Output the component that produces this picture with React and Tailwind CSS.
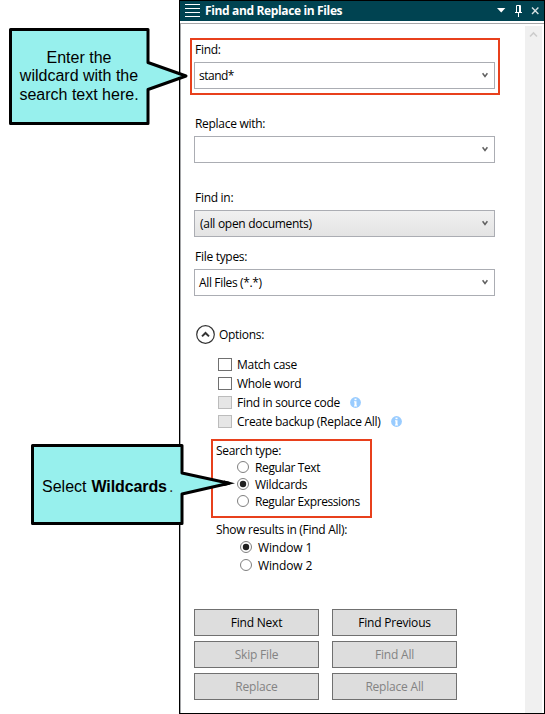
import React from "react";

function Chevron() {
  return (
    <svg width="6" height="6" viewBox="0 0 6 6" className="absolute right-[6px] top-[9px]">
      <path d="M0.6 1.3 L3 4.4 L5.4 1.3" fill="none" stroke="#606060" strokeWidth="1.5" />
    </svg>
  );
}

function Select({ value = "", className = "", textClass = "" }) {
  return (
    <div className={"relative h-[27px] w-[301px] border border-[#abadb3] pt-[4px] " + className}>
      <div className={"h-4 leading-[18px] " + textClass}>{value}</div>
      <Chevron />
    </div>
  );
}

function Info({ className = "" }) {
  return (
    <svg width="11" height="11" viewBox="0 0 11 11" className={className}>
      <circle cx="5.5" cy="5.5" r="5.4" fill="#99ccff" />
      <rect x="4.5" y="1.6" width="2" height="1.6" fill="#fff" />
      <path d="M4 4.2h2.5v4.2H7v1H4v-1h.5V5.2H4z" fill="#fff" />
    </svg>
  );
}

function Check({ label, disabled = false, info = "" }) {
  return (
    <div className="flex h-[19px] pl-[37px]">
      <div
        className={
          "mt-[3px] h-[13px] w-[14px] border " +
          (disabled ? "border-[#bcbcbc] bg-[#e6e6e6]" : "border-[#707070] bg-white")
        }
      />
      <span className="ml-[5px] mt-px h-4 leading-[18px]">{label}</span>
      {disabled && <Info className={info} />}
    </div>
  );
}

function Radio({ label, checked = false, className = "", textClass = "" }) {
  return (
    <div className={"flex " + className}>
      <svg width="12" height="12" viewBox="0 0 12 12" className="mt-[2px] shrink-0">
        <circle cx="6" cy="6" r="5.5" fill="#fff" stroke="#707070" strokeWidth="0.9" />
        {checked && <circle cx="6" cy="6" r="3.2" fill="#212121" />}
      </svg>
      <span className={"ml-[6px] h-4 leading-[18px] " + textClass}>{label}</span>
    </div>
  );
}

function Button({ children, disabled = false }) {
  return (
    <div
      className={
        "h-[27px] border border-[#707070] bg-[#dddddd] pt-[4px] text-center leading-[18px] tracking-[-0.2px] " +
        (disabled ? "text-[#838383]" : "text-black")
      }
    >
      {children}
    </div>
  );
}

export default function App() {
  return (
    <div className="relative h-[714px] w-[545px] overflow-hidden whitespace-nowrap bg-white pl-[179px] font-['Open_Sans','Noto_Sans',sans-serif] text-[12px] tracking-[-0.29px] text-black">
      <div className="flex h-[714px] w-[366px] flex-col border border-black">
        <div className="flex h-5 shrink-0 bg-[#004351] text-white">
          <svg width="15" height="14" viewBox="0 0 15 14" className="ml-[5px] mt-[3px]">
            <path d="M0 .5h15M0 4.5h15M0 8.5h15M0 12.5h15" stroke="#fff" />
          </svg>
          <span className="ml-[5px] mt-px h-4 font-bold leading-[18px] tracking-[-0.36px]">Find and Replace in Files</span>
          <svg width="50" height="20" viewBox="0 0 50 20" className="ml-auto mr-[2px]">
            <path d="M5 7h8.4L9.2 11.6z" fill="#fff" />
            <path d="M24.5 4.5h4v7h-4zM27.5 4.5v7M23 11.5h7M26.5 12v4" fill="none" stroke="#fff" />
            <path d="M40 6.5l6.4 6.4M46.4 6.5L40 12.9" fill="none" stroke="#d5e0e2" strokeWidth="1.4" />
          </svg>
        </div>
        <div className="mt-[2px] flex min-h-0 flex-1 border-l border-t border-[#a5a6a8]">
          <div className="flex-1">
            <div className="ml-[9px] mt-[14px] h-[57px] w-[310px] border-2 border-[#e8401c] pl-[2px] pt-px">
              <div className="ml-px h-4 leading-[18px]">Find:</div>
              <Select value="stand*" className="mt-[5px] bg-white" textClass="pl-[4px] tracking-[-0.5px]" />
            </div>
            <div className="ml-[13px]">
              <div className="ml-px mt-5 h-4 leading-[18px]">Replace with:</div>
              <Select className="mt-[5px] bg-white" />
              <div className="ml-px mt-[26px] h-4 leading-[18px]">Find in:</div>
              <Select
                value="(all open documents)"
                className="mt-[5px] bg-linear-to-b from-[#f0f0f0] to-[#e4e4e4]"
                textClass="pl-[5px]"
              />
              <div className="ml-px mt-[11px] h-4 leading-[18px]">File types:</div>
              <Select value="All Files (*.*)" className="mt-[5px] bg-white" textClass="pl-[4px] tracking-[-0.35px]" />
            </div>
            <div className="ml-[15px] mt-[29px] flex h-[19px]">
              <svg width="19" height="19" viewBox="0 0 19 19">
                <circle cx="9.5" cy="9.5" r="8.8" fill="#fff" stroke="#333" strokeWidth="1.2" />
                <path d="M6 11.4L9.5 8l3.5 3.4" fill="none" stroke="#333" strokeWidth="2" />
              </svg>
              <span className="ml-[4px] mt-px h-4 leading-[18px]">Options:</span>
            </div>
            <div className="mt-[11px]">
              <Check label="Match case" />
              <Check label="Whole word" />
              <Check label="Find in source code" disabled info="ml-[10px] mt-[4px]" />
              <Check label="Create backup (Replace All)" disabled info="ml-[10px] mt-[4px]" />
            </div>
            <div className="ml-[30px] mt-2 h-[79px] w-[161px] border-2 border-[#e8401c] pt-px">
              <div className="ml-[3px] h-[17px] leading-[18px]">Search type:</div>
              <Radio label="Regular Text" className="h-[17px] pl-[24px]" textClass="tracking-[-0.38px]" />
              <Radio label="Wildcards" checked className="h-[17px] pl-[24px]" />
              <Radio label="Regular Expressions" className="h-[17px] pl-[24px]" textClass="tracking-[-0.4px]" />
            </div>
            <div className="ml-[35px] mt-[3px] h-4 leading-[18px]">Show results in (Find All):</div>
            <div className="mt-[2px]">
              <Radio label="Window 1" checked className="h-[18px] pl-[59px]" textClass="tracking-[-0.15px]" />
              <Radio label="Window 2" className="h-[18px] pl-[59px]" textClass="tracking-[-0.15px]" />
            </div>
            <div className="ml-[13px] mt-[34px] grid w-[263px] grid-cols-2 gap-x-[13px] gap-y-[5px]">
              <Button>Find Next</Button>
              <Button>Find Previous</Button>
              <Button disabled>Skip File</Button>
              <Button disabled>Find All</Button>
              <Button disabled>Replace</Button>
              <Button disabled>Replace All</Button>
            </div>
          </div>
          <div className="mr-[2px] mt-[2px] w-[17px] bg-[#f0f0f0]">
            <svg width="17" height="17" viewBox="0 0 17 17">
              <path d="M5 10.5L8.5 7l3.5 3.5" fill="none" stroke="#cdcdcd" strokeWidth="1.6" />
            </svg>
          </div>
        </div>
      </div>

      <div className="absolute left-0 top-[20px] h-[110px] w-[192px] font-['Liberation_Sans',Arial,sans-serif] text-[16px] tracking-normal">
        <svg width="192" height="110" viewBox="0 0 192 110" className="absolute left-0 top-0">
          <path d="M10.5 9.5H148V42.5L186 56L148 69.5V103.5H10.5Z" fill="#97f0ed" stroke="#000" strokeWidth="3" strokeLinejoin="round" />
        </svg>
        <div className="relative ml-[10px] w-[138px] pt-[29px] text-center leading-[18.4px]">
          Enter the
          <br />
          wildcard with the
          <br />
          search text here.
        </div>
      </div>

      <div className="absolute left-[30px] top-[440px] h-[90px] w-[210px] font-['Liberation_Sans',Arial,sans-serif] text-[16px] tracking-normal">
        <svg width="210" height="90" viewBox="0 0 210 90" className="absolute left-0 top-0">
          <path d="M2.5 5.5H152V33L199 43.3L152 54V83.5H2.5Z" fill="#97f0ed" stroke="#000" strokeWidth="3" strokeLinejoin="round" />
          <path d="M194 40.6L205 43.3L194 46Z" fill="#000" />
        </svg>
        <div className="relative flex pl-[12px] pt-[38px] leading-[18px]">
          <span>Select</span>
          <b className="ml-[5px] tracking-[-0.1px]">Wildcards</b>
          <span className="ml-[2px] text-[#333]">.</span>
        </div>
      </div>
    </div>
  );
}
